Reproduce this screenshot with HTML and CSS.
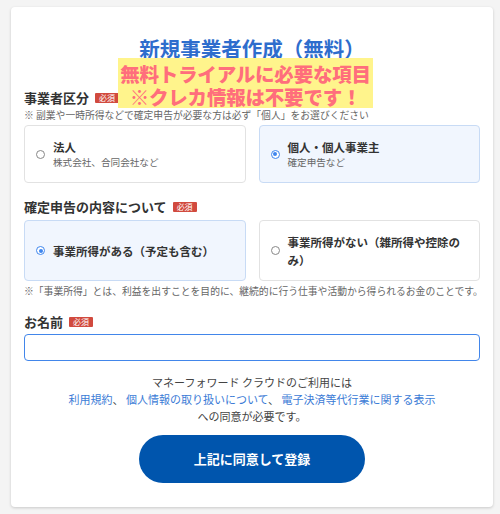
FILE: index.html
```html
<!DOCTYPE html>
<html lang="ja">
<head>
<meta charset="utf-8">
<title>新規事業者作成（無料）</title>
<link rel="stylesheet" href="styles.css">
</head>
<body>
<div class="page">
  <div class="card">
    <h1 class="title">新規事業者作成（無料）</h1>
    <div class="callout">
      <div>無料トライアルに必要な項目</div>
      <div>※クレカ情報は不要です！</div>
    </div>

    <div class="label label-first">事業者区分<span class="badge">必須</span></div>
    <p class="note">※ 副業や一時所得などで確定申告が必要な方は必ず「個人」をお選びください</p>
    <div class="options">
      <label class="option">
        <span class="radio"></span>
        <span class="opt-text">
          <span class="opt-title">法人</span>
          <span class="opt-sub">株式会社、合同会社など</span>
        </span>
      </label>
      <label class="option selected">
        <span class="radio"></span>
        <span class="opt-text">
          <span class="opt-title">個人・個人事業主</span>
          <span class="opt-sub">確定申告など</span>
        </span>
      </label>
    </div>

    <div class="label label-second">確定申告の内容について<span class="badge">必須</span></div>
    <div class="options options-tall">
      <label class="option selected">
        <span class="radio"></span>
        <span class="opt-text">
          <span class="opt-title">事業所得がある（予定も含む）</span>
        </span>
      </label>
      <label class="option">
        <span class="radio"></span>
        <span class="opt-text">
          <span class="opt-title">事業所得がない（雑所得や控除のみ）</span>
        </span>
      </label>
    </div>
    <p class="note note-after">※「事業所得」とは、利益を出すことを目的に、継続的に行う仕事や活動から得られるお金のことです。</p>

    <div class="label label-name">お名前<span class="badge">必須</span></div>
    <input class="name-input" type="text">

    <div class="agree">
      <div>マネーフォワード クラウドのご利用には</div>
      <div class="links"><a href="#">利用規約</a>、 <a href="#">個人情報の取り扱いについて</a>、 <a href="#">電子決済等代行業に関する表示</a></div>
      <div>への同意が必要です。</div>
    </div>

    <div class="btn-row">
      <button class="submit" type="button">上記に同意して登録</button>
    </div>
  </div>
</div>
</body>
</html>
```

FILE: styles.css
```css
* { box-sizing: border-box; }
html, body { margin: 0; padding: 0; }
body {
  background: #f4f4f4;
  font-family: "Noto Sans CJK JP", "Noto Sans", sans-serif;
  color: #333;
}
.page {
  padding: 7px 7px 6px 11px;
}
.card {
  position: relative;
  width: 482px;
  background: #fff;
  border-radius: 4px;
  box-shadow: 0 1px 3px rgba(0,0,0,0.18);
  padding: 28px 13px 24px 13px;
}
.title {
  margin: 0;
  text-align: center;
  font-size: 20.5px;
  line-height: 26px;
  font-weight: 700;
  color: #2e6dcd;
}
.callout {
  position: absolute;
  left: 107px;
  top: 51px;
  width: 255px;
  height: 50px;
  background: #fff48c;
  padding-top: 4px;
  text-align: center;
  color: #ff6e7c;
  font-size: 19.5px;
  line-height: 23px;
  font-weight: 900;
  white-space: nowrap;
  letter-spacing: -0.2px;
}
.label {
  display: flex;
  align-items: center;
  font-size: 13px;
  line-height: 20px;
  font-weight: 700;
  color: #333;
}
.label-first { margin-top: 27px; }
.label-second { margin-top: 14px; }
.label-name { margin-top: 14px; }
.badge {
  display: inline-block;
  margin-left: 6px;
  background: #d14a3e;
  color: #fff;
  font-size: 8px;
  line-height: 10px;
  font-weight: 400;
  padding: 0 4px;
  border-radius: 1px;
}
.note {
  margin: 0;
  font-size: 9.8px;
  line-height: 14px;
  color: #666;
  white-space: nowrap;
}
.note-after { margin-top: 3px; }
.options {
  margin-top: 3px;
  display: grid;
  grid-template-columns: 1fr 1fr;
  gap: 13px;
}
.option {
  display: flex;
  align-items: center;
  gap: 8px;
  border: 1px solid #e2e2e2;
  border-radius: 4px;
  padding: 13px 12px 13px 11px;
  background: #fff;
}
.option.selected {
  background: #f1f6fe;
  border-color: #c8dbf5;
}
.options-tall { margin-top: 3px; }
.options-tall .option { padding: 11.5px 12px 11.5px 11px; }
.radio {
  flex: none;
  width: 9px;
  height: 9px;
  border-radius: 50%;
  border: 1px solid #888;
  background: #fff;
  position: relative;
}
.selected .radio {
  border-color: #3f86ee;
}
.selected .radio::after {
  content: "";
  position: absolute;
  left: 1.5px;
  top: 1.5px;
  width: 4px;
  height: 4px;
  border-radius: 50%;
  background: #3f86ee;
}
.opt-text {
  display: flex;
  flex-direction: column;
}
.opt-title {
  font-size: 11.5px;
  line-height: 16px;
  font-weight: 700;
  color: #333;
}
.options-tall .opt-title { line-height: 18px; }
.opt-sub {
  font-size: 9.6px;
  line-height: 14px;
  color: #666;
}
.name-input {
  display: block;
  margin-top: 2px;
  width: 100%;
  height: 27px;
  border: 1.5px solid #4286ea;
  border-radius: 4px;
  outline: none;
  background: #fff;
}
.agree {
  margin-top: 12.5px;
  text-align: center;
  font-size: 11px;
  line-height: 17.2px;
  color: #444;
}
.links a {
  color: #3b7bd6;
  text-decoration: none;
}
.btn-row {
  display: flex;
  justify-content: center;
  margin-top: 9.5px;
}
.submit {
  width: 226px;
  height: 48px;
  border: none;
  border-radius: 24px;
  background: #0055ad;
  color: #fff;
  font-family: "Noto Sans CJK JP", "Noto Sans", sans-serif;
  font-size: 13px;
  font-weight: 700;
}
```
